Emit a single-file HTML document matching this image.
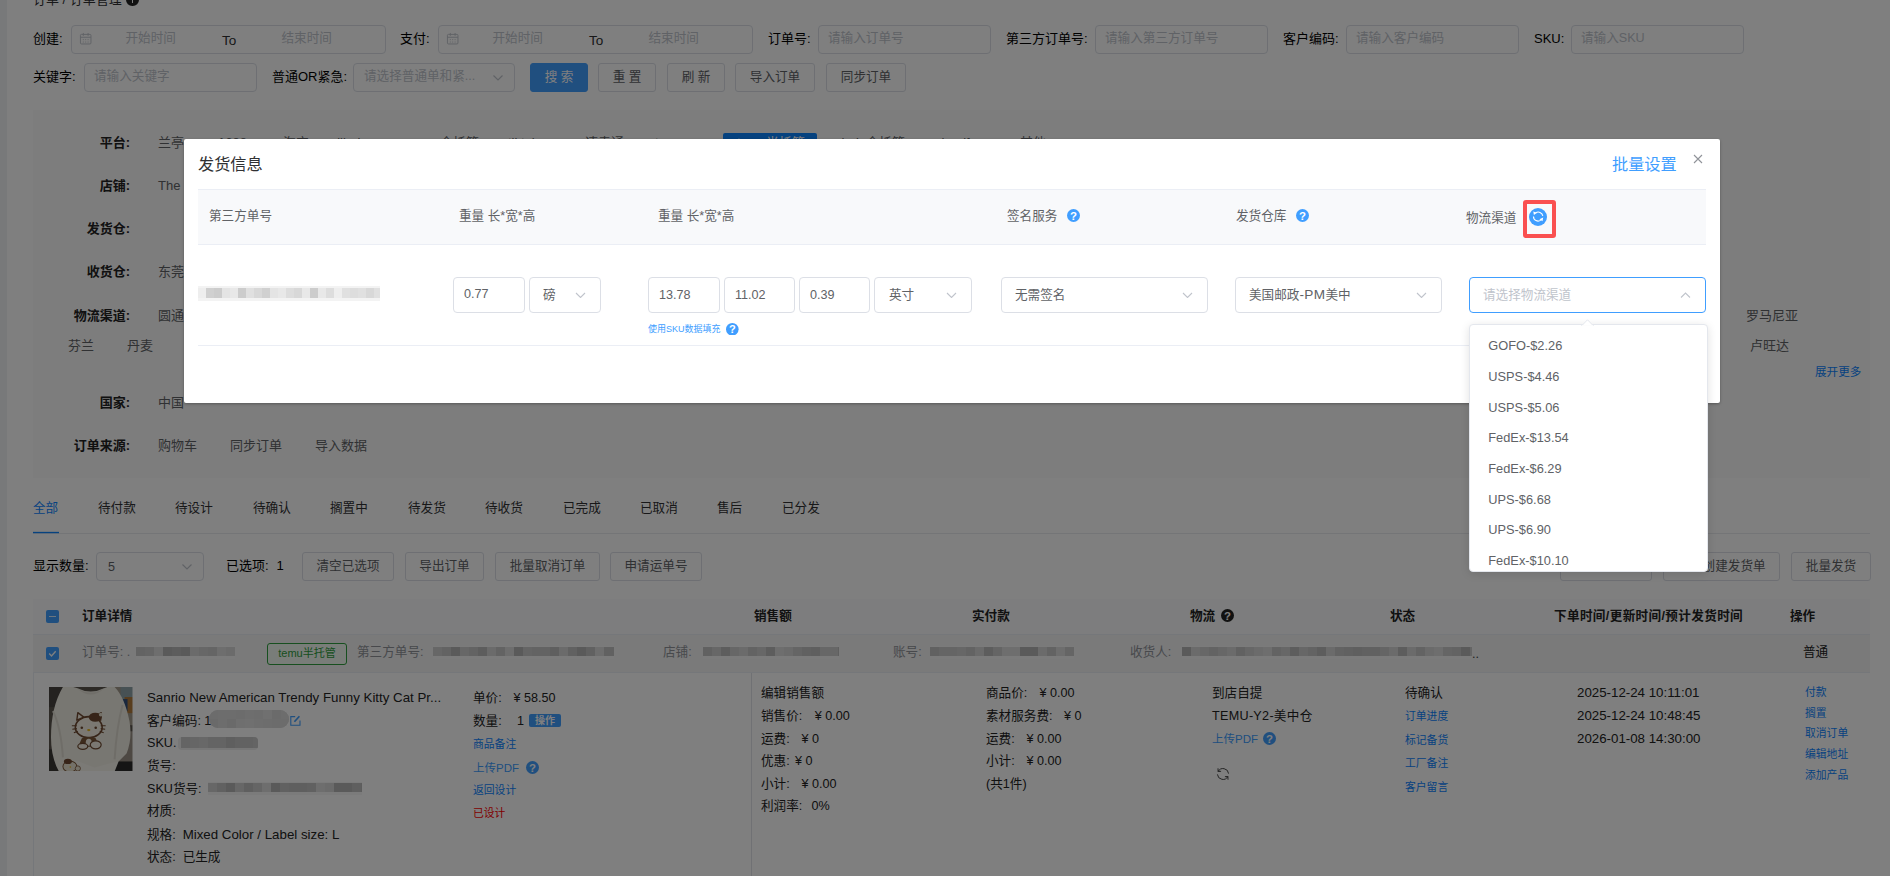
<!DOCTYPE html>
<html lang="zh-CN">
<head>
<meta charset="utf-8">
<title>订单管理</title>
<style>
*{box-sizing:border-box;margin:0;padding:0}
html,body{width:1890px;height:876px;overflow:hidden;background:#fff}
body{position:relative;font-family:"Liberation Sans","Noto Sans CJK SC",sans-serif;font-size:14px;color:#000;line-height:1}
.a{position:absolute;white-space:nowrap}
.t{position:absolute;white-space:nowrap;line-height:20px;height:20px}
.side{left:0;top:0;width:7px;height:876px;background:#f0f2f5}
.inp{position:absolute;height:29px;border:1px solid #dcdfe6;border-radius:4px;background:#fff;color:#c0c4cc;font-size:12.6px;line-height:25px;padding-left:9px;white-space:nowrap;overflow:hidden}
.lbl{position:absolute;white-space:nowrap;font-size:13px;line-height:20px;color:#000;font-weight:400}
.btn{position:absolute;height:29px;border:1px solid #dcdfe6;border-radius:3px;background:#fff;color:#606266;font-size:12.6px;line-height:26.5px;text-align:center;white-space:nowrap}
.btn.pri{background:#409eff;border-color:#409eff;color:#fff}
.blue{color:#409eff}
.lk{color:#409eff}
</style>
</head>
<body>
<!-- ================= BASE PAGE ================= -->
<div id="page" class="a" style="left:0;top:0;width:1890px;height:876px">
<div class="a side"></div>

<!-- breadcrumb (cut off at top) -->
<div class="t" style="left:33px;top:-10px;font-size:13px;color:#303133">订单 / 订单管理</div>
<div class="a" style="left:126px;top:-7px;width:12.5px;height:12.5px;border-radius:50%;background:#222"><i class="a" style="left:5.6px;top:6px;width:1.4px;height:4px;background:#fff"></i></div>


<!-- filter row 1 -->
<div class="lbl" style="left:33px;top:29px">创建:</div>
<div class="inp" style="left:71px;top:25px;width:315px;padding:0"><svg class="a" style="left:7px;top:5.7px" width="13.4" height="13.4" viewBox="0 0 14 14" fill="none" stroke="#c0c4cc" stroke-width="1"><rect x="1.5" y="2.5" width="11" height="10" rx="1"/><path d="M1.5 5.5h11M4.5 1v3M9.5 1v3"/><path d="M4 8h1M6.5 8h1M9 8h1M4 10.5h1M6.5 10.5h1M9 10.5h1" stroke-width="1"/></svg><span class="a" style="left:53.5px;top:-0.4px">开始时间</span><span class="a" style="left:150px;top:2px;color:#303133;font-size:13.5px">To</span><span class="a" style="left:209.5px;top:-0.4px">结束时间</span></div>
<div class="lbl" style="left:400px;top:29px">支付:</div>
<div class="inp" style="left:438px;top:25px;width:315px;padding:0"><svg class="a" style="left:7px;top:5.7px" width="13.4" height="13.4" viewBox="0 0 14 14" fill="none" stroke="#c0c4cc" stroke-width="1"><rect x="1.5" y="2.5" width="11" height="10" rx="1"/><path d="M1.5 5.5h11M4.5 1v3M9.5 1v3"/><path d="M4 8h1M6.5 8h1M9 8h1M4 10.5h1M6.5 10.5h1M9 10.5h1" stroke-width="1"/></svg><span class="a" style="left:53.5px;top:-0.4px">开始时间</span><span class="a" style="left:150px;top:2px;color:#303133;font-size:13.5px">To</span><span class="a" style="left:209.5px;top:-0.4px">结束时间</span></div>
<div class="lbl" style="left:768px;top:29px">订单号:</div>
<div class="inp" style="left:818px;top:25px;width:173px">请输入订单号</div>
<div class="lbl" style="left:1006px;top:29px">第三方订单号:</div>
<div class="inp" style="left:1095px;top:25px;width:173px">请输入第三方订单号</div>
<div class="lbl" style="left:1283px;top:29px">客户编码:</div>
<div class="inp" style="left:1346px;top:25px;width:173px">请输入客户编码</div>
<div class="lbl" style="left:1534px;top:29px">SKU:</div>
<div class="inp" style="left:1571px;top:25px;width:173px">请输入SKU</div>
<!-- filter row 2 -->
<div class="lbl" style="left:33px;top:67px">关键字:</div>
<div class="inp" style="left:84px;top:63px;width:173px">请输入关键字</div>
<div class="lbl" style="left:272px;top:67px">普通OR紧急:</div>
<div class="inp" style="left:353px;top:63px;width:162px;padding-left:10px">请选择普通单和紧...<svg class="a" style="right:10px;top:9px" width="12" height="10" viewBox="0 0 12 10" fill="none" stroke="#c0c4cc" stroke-width="1.2"><path d="M1.5 2.5l4.5 4.5 4.5-4.5"/></svg></div>
<div class="btn pri" style="left:530px;top:63px;width:58px">搜 索</div>
<div class="btn" style="left:598px;top:63px;width:58px">重 置</div>
<div class="btn" style="left:667px;top:63px;width:58px">刷 新</div>
<div class="btn" style="left:735px;top:63px;width:80px">导入订单</div>
<div class="btn" style="left:826px;top:63px;width:80px">同步订单</div>


<!-- filter panel -->
<style>
.fl{position:absolute;left:33px;width:97px;text-align:right;font-size:13px;font-weight:700;color:#222;line-height:20px;white-space:nowrap}
.fv{position:absolute;font-size:13px;color:#606266;line-height:20px;white-space:nowrap}
</style>
<div class="a" style="left:33px;top:110px;width:1837px;height:368px;background:#fafafa"></div>
<div class="fl" style="top:133px">平台:</div><div class="fv" style="left:158px;top:133px">兰亭</div><div class="fv" style="left:218px;top:133px">1688</div><div class="fv" style="left:283px;top:133px">淘宝</div><div class="fv" style="left:330px;top:133px">alibaba</div><div class="fv" style="left:440px;top:133px">全托管</div><div class="fv" style="left:508px;top:133px">tiktok</div><div class="fv" style="left:585px;top:133px">速卖通</div><div class="fv" style="left:655px;top:133px">temu</div><div class="fv" style="left:835px;top:133px">shein全托管</div><div class="fv" style="left:935px;top:133px">shopify</div><div class="fv" style="left:1020px;top:133px">其他</div>
<div class="a" style="left:723px;top:133px;width:94px;height:22px;background:#0d84ff;color:#fff;font-size:13px;line-height:20px;text-align:right;padding-right:12px;border-radius:2px">temu半托管</div>
<div class="fl" style="top:176px">店铺:</div><div class="fv" style="left:158px;top:176px">The</div>
<div class="fl" style="top:219px">发货仓:</div>
<div class="fl" style="top:262px">收货仓:</div><div class="fv" style="left:158px;top:262px">东莞</div>
<div class="fl" style="top:306px">物流渠道:</div><div class="fv" style="left:158px;top:306px">圆通</div><div class="fv" style="left:1746px;top:306px">罗马尼亚</div>
<div class="fv" style="left:68px;top:336px">芬兰</div><div class="fv" style="left:127px;top:336px">丹麦</div><div class="fv" style="left:1750px;top:336px">卢旺达</div>
<div class="a" style="left:1815px;top:364px;font-size:11.6px;line-height:16px;color:#0d84ff">展开更多</div>
<div class="fl" style="top:393px">国家:</div><div class="fv" style="left:158px;top:393px">中国</div>
<div class="fl" style="top:436px">订单来源:</div><div class="fv" style="left:158px;top:436px">购物车</div><div class="fv" style="left:230px;top:436px">同步订单</div><div class="fv" style="left:315px;top:436px">导入数据</div>


<!-- tabs -->
<div class="t" style="left:33px;top:498px;font-size:12.6px;color:#0d84ff">全部</div><div class="t" style="left:98px;top:498px;font-size:12.6px;color:#303133">待付款</div><div class="t" style="left:175px;top:498px;font-size:12.6px;color:#303133">待设计</div><div class="t" style="left:253px;top:498px;font-size:12.6px;color:#303133">待确认</div><div class="t" style="left:330px;top:498px;font-size:12.6px;color:#303133">搁置中</div><div class="t" style="left:408px;top:498px;font-size:12.6px;color:#303133">待发货</div><div class="t" style="left:485px;top:498px;font-size:12.6px;color:#303133">待收货</div><div class="t" style="left:563px;top:498px;font-size:12.6px;color:#303133">已完成</div><div class="t" style="left:640px;top:498px;font-size:12.6px;color:#303133">已取消</div><div class="t" style="left:717px;top:498px;font-size:12.6px;color:#303133">售后</div><div class="t" style="left:782px;top:498px;font-size:12.6px;color:#303133">已分发</div>
<svg class="a" style="left:33px;top:531px" width="1837" height="4" viewBox="0 0 1837 4"><rect x="0" y="2.15" width="1837" height=".9" fill="#e4e7ed"/><rect x="0" y=".85" width="26" height="1.35" fill="#0d84ff"/></svg>
<!-- toolbar -->
<div class="lbl" style="left:33px;top:556px;font-size:13px">显示数量:</div>
<div class="inp" style="left:96px;top:552px;width:108px;color:#606266;padding-left:11px;line-height:28px">5<svg class="a" style="right:10px;top:9px" width="12" height="10" viewBox="0 0 12 10" fill="none" stroke="#c0c4cc" stroke-width="1.2"><path d="M1.5 2.5l4.5 4.5 4.5-4.5"/></svg></div>
<div class="lbl" style="left:226px;top:556px;font-size:13px">已选项:<span class="a" style="left:50.5px;top:0">1</span></div>
<div class="btn" style="left:302px;top:552px;width:92px">清空已选项</div>
<div class="btn" style="left:405px;top:552px;width:79px">导出订单</div>
<div class="btn" style="left:495px;top:552px;width:105px">批量取消订单</div>
<div class="btn" style="left:610px;top:552px;width:92px">申请运单号</div>
<div class="btn" style="left:1560px;top:552px;width:92px">批量打印</div>
<div class="btn" style="left:1663px;top:552px;width:117px">批量创建发货单</div>
<div class="btn" style="left:1791px;top:552px;width:80px">批量发货</div>


<!-- table -->
<style>
.th{position:absolute;top:606px;font-size:12.6px;font-weight:700;color:#222;line-height:20px;white-space:nowrap}
.g{position:absolute;font-size:12.6px;color:#909399;line-height:20px;white-space:nowrap}
.d{position:absolute;font-size:12.6px;color:#222;line-height:20px;white-space:nowrap;margin-top:.6px}
.s{position:absolute;font-size:10.8px;color:#0d84ff;line-height:16px;white-space:nowrap;margin-top:1px}
.cb{position:absolute;width:13px;height:13px;border-radius:2px;background:#409eff}
</style>
<div class="a" style="left:33px;top:599px;width:1837px;height:35px;background:#fafbfc"></div>
<div class="a" style="left:33px;top:634px;width:1837px;height:39px;background:#f4f4f5;border-top:1px solid #ebeef5;border-bottom:1px solid #ebeef5"></div>
<div class="a" style="left:33px;top:673px;width:1px;height:203px;background:#ebeef5"></div>
<div class="a" style="left:751px;top:673px;width:1px;height:203px;background:#e0e3e8"></div>
<div class="cb" style="left:46px;top:610px"><i class="a" style="left:3px;top:6px;width:7px;height:1px;background:#fff;opacity:.8"></i></div>
<div class="th" style="left:82px">订单详情</div>
<div class="th" style="left:754px">销售额</div>
<div class="th" style="left:972px">实付款</div>
<div class="th" style="left:1190px">物流</div>
<svg class="a" style="left:1221px;top:609px" width="13" height="13" viewBox="0 0 13 13"><circle cx="6.5" cy="6.5" r="6.5" fill="#222"/><text x="6.55" y="10.7" text-anchor="middle" font-family="Liberation Sans,sans-serif" font-weight="700" font-size="11.4" fill="#fff">?</text></svg>
<div class="th" style="left:1390px">状态</div>
<div class="th" style="left:1554px;letter-spacing:.36px">下单时间/更新时间/预计发货时间</div>
<div class="th" style="left:1790px">操作</div>
<!-- order header row -->
<div class="cb" style="left:46px;top:647px"><svg class="a" style="left:2px;top:2px" width="9" height="9" viewBox="0 0 9 9" fill="none" stroke="#fff" stroke-width="1.4"><path d="M1.2 4.6l2.3 2.3 4.2-4.6"/></svg></div>
<div class="g" style="left:82px;top:642px">订单号: .</div>
<div class="a" style="left:136px;top:646px;width:99px;height:13px;overflow:hidden;background:#f6f6f6"><i style="position:absolute;left:0px;top:1px;width:9px;height:9px;background:#c6c6c6"></i><i style="position:absolute;left:9px;top:1px;width:9px;height:9px;background:#cacaca"></i><i style="position:absolute;left:18px;top:1px;width:9px;height:9px;background:#dcdcdc"></i><i style="position:absolute;left:27px;top:1px;width:9px;height:9px;background:#b4b4b4"></i><i style="position:absolute;left:36px;top:1px;width:9px;height:9px;background:#bababa"></i><i style="position:absolute;left:45px;top:1px;width:9px;height:9px;background:#b4b4b4"></i><i style="position:absolute;left:54px;top:1px;width:9px;height:9px;background:#d6d6d6"></i><i style="position:absolute;left:63px;top:1px;width:9px;height:9px;background:#cecece"></i><i style="position:absolute;left:72px;top:1px;width:9px;height:9px;background:#cacaca"></i><i style="position:absolute;left:81px;top:1px;width:9px;height:9px;background:#dcdcdc"></i><i style="position:absolute;left:90px;top:1px;width:9px;height:9px;background:#d6d6d6"></i><i style="position:absolute;left:99px;top:1px;width:9px;height:9px;background:#cecece"></i></div>
<div class="a" style="left:267px;top:643px;width:80px;height:22px;border:1px solid #2e9e3e;border-radius:3px;background:#f3faf3;color:#2e9e3e;font-size:11px;line-height:19.5px;text-align:center">temu半托管</div>
<div class="g" style="left:357px;top:642px">第三方单号:</div>
<div class="a" style="left:433px;top:646px;width:181px;height:13px;overflow:hidden;background:#f6f6f6"><i style="position:absolute;left:0px;top:1px;width:9px;height:9px;background:#cecece"></i><i style="position:absolute;left:9px;top:1px;width:9px;height:9px;background:#c6c6c6"></i><i style="position:absolute;left:18px;top:1px;width:9px;height:9px;background:#b4b4b4"></i><i style="position:absolute;left:27px;top:1px;width:9px;height:9px;background:#cecece"></i><i style="position:absolute;left:36px;top:1px;width:9px;height:9px;background:#c6c6c6"></i><i style="position:absolute;left:45px;top:1px;width:9px;height:9px;background:#bababa"></i><i style="position:absolute;left:54px;top:1px;width:9px;height:9px;background:#d6d6d6"></i><i style="position:absolute;left:63px;top:1px;width:9px;height:9px;background:#c6c6c6"></i><i style="position:absolute;left:72px;top:1px;width:9px;height:9px;background:#dcdcdc"></i><i style="position:absolute;left:81px;top:1px;width:9px;height:9px;background:#b4b4b4"></i><i style="position:absolute;left:90px;top:1px;width:9px;height:9px;background:#cacaca"></i><i style="position:absolute;left:99px;top:1px;width:9px;height:9px;background:#c6c6c6"></i><i style="position:absolute;left:108px;top:1px;width:9px;height:9px;background:#c6c6c6"></i><i style="position:absolute;left:117px;top:1px;width:9px;height:9px;background:#bebebe"></i><i style="position:absolute;left:126px;top:1px;width:9px;height:9px;background:#d6d6d6"></i><i style="position:absolute;left:135px;top:1px;width:9px;height:9px;background:#c2c2c2"></i><i style="position:absolute;left:144px;top:1px;width:9px;height:9px;background:#b4b4b4"></i><i style="position:absolute;left:153px;top:1px;width:9px;height:9px;background:#c2c2c2"></i><i style="position:absolute;left:162px;top:1px;width:9px;height:9px;background:#dcdcdc"></i><i style="position:absolute;left:171px;top:1px;width:9px;height:9px;background:#c2c2c2"></i><i style="position:absolute;left:180px;top:1px;width:9px;height:9px;background:#c2c2c2"></i></div>
<div class="g" style="left:663px;top:642px">店铺:</div>
<div class="a" style="left:703px;top:646px;width:136px;height:13px;overflow:hidden;background:#f6f6f6"><i style="position:absolute;left:0px;top:1px;width:9px;height:9px;background:#c2c2c2"></i><i style="position:absolute;left:9px;top:1px;width:9px;height:9px;background:#cecece"></i><i style="position:absolute;left:18px;top:1px;width:9px;height:9px;background:#bababa"></i><i style="position:absolute;left:27px;top:1px;width:9px;height:9px;background:#cecece"></i><i style="position:absolute;left:36px;top:1px;width:9px;height:9px;background:#d6d6d6"></i><i style="position:absolute;left:45px;top:1px;width:9px;height:9px;background:#c6c6c6"></i><i style="position:absolute;left:54px;top:1px;width:9px;height:9px;background:#cecece"></i><i style="position:absolute;left:63px;top:1px;width:9px;height:9px;background:#bababa"></i><i style="position:absolute;left:72px;top:1px;width:9px;height:9px;background:#dcdcdc"></i><i style="position:absolute;left:81px;top:1px;width:9px;height:9px;background:#d6d6d6"></i><i style="position:absolute;left:90px;top:1px;width:9px;height:9px;background:#cacaca"></i><i style="position:absolute;left:99px;top:1px;width:9px;height:9px;background:#c2c2c2"></i><i style="position:absolute;left:108px;top:1px;width:9px;height:9px;background:#bebebe"></i><i style="position:absolute;left:117px;top:1px;width:9px;height:9px;background:#cecece"></i><i style="position:absolute;left:126px;top:1px;width:9px;height:9px;background:#cecece"></i><i style="position:absolute;left:135px;top:1px;width:9px;height:9px;background:#bebebe"></i></div>
<div class="g" style="left:893px;top:642px">账号:</div>
<div class="a" style="left:930px;top:646px;width:144px;height:13px;overflow:hidden;background:#f6f6f6"><i style="position:absolute;left:0px;top:1px;width:9px;height:9px;background:#c2c2c2"></i><i style="position:absolute;left:9px;top:1px;width:9px;height:9px;background:#cacaca"></i><i style="position:absolute;left:18px;top:1px;width:9px;height:9px;background:#cacaca"></i><i style="position:absolute;left:27px;top:1px;width:9px;height:9px;background:#cecece"></i><i style="position:absolute;left:36px;top:1px;width:9px;height:9px;background:#c6c6c6"></i><i style="position:absolute;left:45px;top:1px;width:9px;height:9px;background:#d6d6d6"></i><i style="position:absolute;left:54px;top:1px;width:9px;height:9px;background:#bababa"></i><i style="position:absolute;left:63px;top:1px;width:9px;height:9px;background:#cacaca"></i><i style="position:absolute;left:72px;top:1px;width:9px;height:9px;background:#dcdcdc"></i><i style="position:absolute;left:81px;top:1px;width:9px;height:9px;background:#dcdcdc"></i><i style="position:absolute;left:90px;top:1px;width:9px;height:9px;background:#b4b4b4"></i><i style="position:absolute;left:99px;top:1px;width:9px;height:9px;background:#b4b4b4"></i><i style="position:absolute;left:108px;top:1px;width:9px;height:9px;background:#d6d6d6"></i><i style="position:absolute;left:117px;top:1px;width:9px;height:9px;background:#c6c6c6"></i><i style="position:absolute;left:126px;top:1px;width:9px;height:9px;background:#dcdcdc"></i><i style="position:absolute;left:135px;top:1px;width:9px;height:9px;background:#cacaca"></i><i style="position:absolute;left:144px;top:1px;width:9px;height:9px;background:#b4b4b4"></i></div>
<div class="g" style="left:1130px;top:642px">收货人:</div>
<div class="a" style="left:1182px;top:646px;width:290px;height:13px;overflow:hidden;background:#f6f6f6"><i style="position:absolute;left:0px;top:1px;width:9px;height:9px;background:#b4b4b4"></i><i style="position:absolute;left:9px;top:1px;width:9px;height:9px;background:#d6d6d6"></i><i style="position:absolute;left:18px;top:1px;width:9px;height:9px;background:#cecece"></i><i style="position:absolute;left:27px;top:1px;width:9px;height:9px;background:#c6c6c6"></i><i style="position:absolute;left:36px;top:1px;width:9px;height:9px;background:#cecece"></i><i style="position:absolute;left:45px;top:1px;width:9px;height:9px;background:#d6d6d6"></i><i style="position:absolute;left:54px;top:1px;width:9px;height:9px;background:#c2c2c2"></i><i style="position:absolute;left:63px;top:1px;width:9px;height:9px;background:#cecece"></i><i style="position:absolute;left:72px;top:1px;width:9px;height:9px;background:#d6d6d6"></i><i style="position:absolute;left:81px;top:1px;width:9px;height:9px;background:#dcdcdc"></i><i style="position:absolute;left:90px;top:1px;width:9px;height:9px;background:#c6c6c6"></i><i style="position:absolute;left:99px;top:1px;width:9px;height:9px;background:#cecece"></i><i style="position:absolute;left:108px;top:1px;width:9px;height:9px;background:#bababa"></i><i style="position:absolute;left:117px;top:1px;width:9px;height:9px;background:#cecece"></i><i style="position:absolute;left:126px;top:1px;width:9px;height:9px;background:#c6c6c6"></i><i style="position:absolute;left:135px;top:1px;width:9px;height:9px;background:#bababa"></i><i style="position:absolute;left:144px;top:1px;width:9px;height:9px;background:#d6d6d6"></i><i style="position:absolute;left:153px;top:1px;width:9px;height:9px;background:#c6c6c6"></i><i style="position:absolute;left:162px;top:1px;width:9px;height:9px;background:#c2c2c2"></i><i style="position:absolute;left:171px;top:1px;width:9px;height:9px;background:#bebebe"></i><i style="position:absolute;left:180px;top:1px;width:9px;height:9px;background:#c2c2c2"></i><i style="position:absolute;left:189px;top:1px;width:9px;height:9px;background:#c2c2c2"></i><i style="position:absolute;left:198px;top:1px;width:9px;height:9px;background:#cacaca"></i><i style="position:absolute;left:207px;top:1px;width:9px;height:9px;background:#d6d6d6"></i><i style="position:absolute;left:216px;top:1px;width:9px;height:9px;background:#bababa"></i><i style="position:absolute;left:225px;top:1px;width:9px;height:9px;background:#d6d6d6"></i><i style="position:absolute;left:234px;top:1px;width:9px;height:9px;background:#c6c6c6"></i><i style="position:absolute;left:243px;top:1px;width:9px;height:9px;background:#d6d6d6"></i><i style="position:absolute;left:252px;top:1px;width:9px;height:9px;background:#dcdcdc"></i><i style="position:absolute;left:261px;top:1px;width:9px;height:9px;background:#cacaca"></i><i style="position:absolute;left:270px;top:1px;width:9px;height:9px;background:#c6c6c6"></i><i style="position:absolute;left:279px;top:1px;width:9px;height:9px;background:#b4b4b4"></i><i style="position:absolute;left:288px;top:1px;width:9px;height:9px;background:#cacaca"></i></div>
<div class="g" style="left:1472px;top:644px;color:#444">..</div>
<div class="d" style="left:1803px;top:641px">普通</div>
<!-- detail row -->
<svg class="a" style="left:49px;top:686.5px" width="83.5" height="84.5" viewBox="0 0 84 84" preserveAspectRatio="none">
<defs><filter id="bl" x="-5%" y="-5%" width="110%" height="110%"><feGaussianBlur stdDeviation="0.7"/></filter><clipPath id="ic"><rect width="84" height="84"/></clipPath></defs>
<g clip-path="url(#ic)"><g filter="url(#bl)">
<rect x="-2" y="-2" width="88" height="88" fill="#5a544e"/>
<rect x="-2" y="-2" width="16" height="22" fill="#4a4541"/>
<rect x="64" y="-2" width="22" height="40" fill="#a39a8c"/>
<rect x="72" y="0" width="14" height="12" fill="#8fa3a8"/>
<rect x="76" y="10" width="10" height="16" fill="#b07a3c"/>
<rect x="74" y="12" width="5" height="12" fill="#33507a"/>
<rect x="-2" y="62" width="12" height="24" fill="#3a3836"/>
<rect x="60" y="70" width="26" height="16" fill="#2b2b2b"/>
<rect x="70" y="44" width="16" height="30" fill="#9a9186"/>
<path d="M14 0 Q20 -2 28 1 Q42 8 56 1 Q62 -2 66 0 Q76 10 81 34 Q84 52 78 66 L70 74 Q62 84 52 84 L10 84 Q2 70 2 50 Q2 20 14 0Z" fill="#f1eee4"/>
<path d="M28 1 Q42 10 56 1 Q42 14 28 1Z" fill="#e2dfd4"/>
<path d="M4 24 Q12 40 14 70" stroke="#dedbd0" stroke-width="2" fill="none"/>
<path d="M74 18 Q68 40 66 72" stroke="#dedbd0" stroke-width="2" fill="none"/>
<path d="M10 84 Q14 70 30 74 L46 80 L60 76 L70 74 L66 84Z" fill="#f6f4ec"/>
<ellipse cx="40" cy="40" rx="13.5" ry="10.5" fill="#f6f1e4" stroke="#6e4a30" stroke-width="1.6"/>
<path d="M28 33 L29 25.5 L35 30Z M52 33 L52.5 25.5 L46 30Z" fill="#f6f1e4" stroke="#6e4a30" stroke-width="1.4" stroke-linejoin="round"/>
<ellipse cx="46.5" cy="30" rx="6.5" ry="4.5" fill="#6e4a30"/>
<circle cx="52" cy="27.5" r="1.8" fill="#e9e2d2"/>
<circle cx="33" cy="40.5" r="1.3" fill="#6e4a30"/><circle cx="47" cy="40.5" r="1.3" fill="#6e4a30"/>
<ellipse cx="40" cy="42.8" rx="1.7" ry="1.1" fill="#e8b820"/>
<path d="M23 38.5h5M23.5 42l4.5 -.6M25 45.5l4 -1.6M57 38.5h-5M56.500 42l-4.5 -.6M55 45.500l-4 -1.600" stroke="#6e4a30" stroke-width="1.1"/>
<path d="M33 51 Q40 48 47 51 L50 58 Q40 61 30 58Z" fill="#7a5638"/>
<ellipse cx="40" cy="55" rx="3" ry="3.5" fill="#f6f1e4"/>
<ellipse cx="34" cy="59" rx="5" ry="3" fill="#f6f1e4" stroke="#6e4a30" stroke-width="1.2"/>
<ellipse cx="47" cy="57.5" rx="5.5" ry="4" fill="#f6f1e4" stroke="#6e4a30" stroke-width="1.2"/>
<ellipse cx="21" cy="79" rx="7" ry="5.5" fill="#e9e2d0" stroke="#7a5638" stroke-width="1"/>
<ellipse cx="19" cy="74" rx="4" ry="2.6" fill="#6e4a30"/>
<circle cx="29" cy="81" r="2.6" fill="#e9e2d0" stroke="#7a5638" stroke-width=".8"/>
<circle cx="21.5" cy="79.500" r=".8" fill="#e8b820"/>
</g></g></svg>
<div class="d" style="left:147px;top:687px"><span style="font-size:13.3px">Sanrio New American Trendy Funny Kitty Cat Pr...</span></div><div class="d" style="left:147px;top:710px">客户编码: 1</div><div class="d" style="left:147px;top:732px">SKU.</div><div class="d" style="left:147px;top:755px">货号:</div><div class="d" style="left:147px;top:778px">SKU货号:</div><div class="d" style="left:147px;top:800px">材质:</div><div class="d" style="left:147px;top:824px">规格: &nbsp;<span style="font-size:13.3px">Mixed Color / Label size: L</span></div><div class="d" style="left:147px;top:846px">状态: &nbsp;已生成</div>
<div class="a" style="left:209px;top:710px;width:80px;height:18px;overflow:hidden;border-radius:9px;background:#dcdcdc"><i style="position:absolute;left:0px;top:0px;width:9px;height:9px;background:#d8d8d8"></i><i style="position:absolute;left:9px;top:0px;width:9px;height:9px;background:#dadada"></i><i style="position:absolute;left:18px;top:0px;width:9px;height:9px;background:#dadada"></i><i style="position:absolute;left:27px;top:0px;width:9px;height:9px;background:#d8d8d8"></i><i style="position:absolute;left:36px;top:0px;width:9px;height:9px;background:#dcdcdc"></i><i style="position:absolute;left:45px;top:0px;width:9px;height:9px;background:#dadada"></i><i style="position:absolute;left:54px;top:0px;width:9px;height:9px;background:#e0e0e0"></i><i style="position:absolute;left:63px;top:0px;width:9px;height:9px;background:#d6d6d6"></i><i style="position:absolute;left:72px;top:0px;width:9px;height:9px;background:#dadada"></i><i style="position:absolute;left:0px;top:9px;width:9px;height:9px;background:#d4d4d4"></i><i style="position:absolute;left:9px;top:9px;width:9px;height:9px;background:#dadada"></i><i style="position:absolute;left:18px;top:9px;width:9px;height:9px;background:#d4d4d4"></i><i style="position:absolute;left:27px;top:9px;width:9px;height:9px;background:#dedede"></i><i style="position:absolute;left:36px;top:9px;width:9px;height:9px;background:#e0e0e0"></i><i style="position:absolute;left:45px;top:9px;width:9px;height:9px;background:#dcdcdc"></i><i style="position:absolute;left:54px;top:9px;width:9px;height:9px;background:#dadada"></i><i style="position:absolute;left:63px;top:9px;width:9px;height:9px;background:#d8d8d8"></i><i style="position:absolute;left:72px;top:9px;width:9px;height:9px;background:#d8d8d8"></i></div><div class="a" style="left:178px;top:737px;width:80px;height:13px;overflow:hidden;border-radius:4px;background:#eee"><i style="position:absolute;left:3px;top:0;width:9px;height:11px;background:#c8c8c8"></i><i style="position:absolute;left:12px;top:0;width:9px;height:11px;background:#cccccc"></i><i style="position:absolute;left:21px;top:0;width:9px;height:11px;background:#d0d0d0"></i><i style="position:absolute;left:30px;top:0;width:9px;height:11px;background:#c8c8c8"></i><i style="position:absolute;left:39px;top:0;width:9px;height:11px;background:#c8c8c8"></i><i style="position:absolute;left:48px;top:0;width:9px;height:11px;background:#bebebe"></i><i style="position:absolute;left:57px;top:0;width:9px;height:11px;background:#c4c4c4"></i><i style="position:absolute;left:66px;top:0;width:9px;height:11px;background:#c4c4c4"></i><i style="position:absolute;left:75px;top:0;width:9px;height:11px;background:#c8c8c8"></i></div><div class="a" style="left:208px;top:782px;width:154px;height:13px;overflow:hidden;background:#f6f6f6"><i style="position:absolute;left:0px;top:1px;width:9px;height:9px;background:#cecece"></i><i style="position:absolute;left:9px;top:1px;width:9px;height:9px;background:#c2c2c2"></i><i style="position:absolute;left:18px;top:1px;width:9px;height:9px;background:#b4b4b4"></i><i style="position:absolute;left:27px;top:1px;width:9px;height:9px;background:#cecece"></i><i style="position:absolute;left:36px;top:1px;width:9px;height:9px;background:#bebebe"></i><i style="position:absolute;left:45px;top:1px;width:9px;height:9px;background:#cacaca"></i><i style="position:absolute;left:54px;top:1px;width:9px;height:9px;background:#dcdcdc"></i><i style="position:absolute;left:63px;top:1px;width:9px;height:9px;background:#b4b4b4"></i><i style="position:absolute;left:72px;top:1px;width:9px;height:9px;background:#c2c2c2"></i><i style="position:absolute;left:81px;top:1px;width:9px;height:9px;background:#bebebe"></i><i style="position:absolute;left:90px;top:1px;width:9px;height:9px;background:#bebebe"></i><i style="position:absolute;left:99px;top:1px;width:9px;height:9px;background:#c2c2c2"></i><i style="position:absolute;left:108px;top:1px;width:9px;height:9px;background:#dcdcdc"></i><i style="position:absolute;left:117px;top:1px;width:9px;height:9px;background:#d6d6d6"></i><i style="position:absolute;left:126px;top:1px;width:9px;height:9px;background:#b4b4b4"></i><i style="position:absolute;left:135px;top:1px;width:9px;height:9px;background:#b4b4b4"></i><i style="position:absolute;left:144px;top:1px;width:9px;height:9px;background:#bebebe"></i><i style="position:absolute;left:153px;top:1px;width:9px;height:9px;background:#bababa"></i></div><svg class="a" style="left:289.5px;top:714.7px" width="11" height="11" viewBox="0 0 11 11" fill="none" stroke="#409eff" stroke-width="1.1"><path d="M10 5.6V10.2H.8V1.6H5.2"/><path d="M4.4 6.8L9.400 1.2" stroke-width="1.7"/></svg>
<div class="d" style="left:473px;top:687px"><span style="display:inline-block;width:40.6px">单价:</span>¥ 58.50</div><div class="d" style="left:473px;top:710px"><span style="display:inline-block;width:44px">数量:</span>1</div>
<div class="a" style="left:529px;top:714px;width:32px;height:13px;background:#409eff;border-radius:2px;color:#fff;font-size:10px;line-height:13px;text-align:center;font-weight:700">操作</div>
<div class="s" style="left:473px;top:735px">商品备注</div><div class="s" style="left:473px;top:759px"><span style="font-size:11.5px;color:#409eff">上传PDF</span></div><div class="s" style="left:473px;top:781px">返回设计</div>
<svg class="a" style="left:526px;top:761px" width="13" height="13" viewBox="0 0 13 13"><circle cx="6.5" cy="6.5" r="6.5" fill="#409eff"/><text x="6.55" y="10.7" text-anchor="middle" font-family="Liberation Sans,sans-serif" font-weight="700" font-size="11.4" fill="#fff">?</text></svg><div class="s" style="left:473px;top:804px;color:#f00">已设计</div>
<div class="d" style="left:761px;top:682px">编辑销售额</div><div class="d" style="left:761px;top:705px"><span style="display:inline-block;width:53.8px">销售价:</span>¥ 0.00</div><div class="d" style="left:761px;top:728px"><span style="display:inline-block;width:40.5px">运费:</span>¥ 0</div><div class="d" style="left:761px;top:750px"><span style="display:inline-block;width:34px">优惠:</span>¥ 0</div><div class="d" style="left:761px;top:773px"><span style="display:inline-block;width:40.5px">小计:</span>¥ 0.00</div><div class="d" style="left:761px;top:795px"><span style="display:inline-block;width:50.6px">利润率:</span>0%</div>
<div class="d" style="left:986px;top:682px"><span style="display:inline-block;width:53.6px">商品价:</span>¥ 0.00</div><div class="d" style="left:986px;top:705px"><span style="display:inline-block;width:78px">素材服务费:</span>¥ 0</div><div class="d" style="left:986px;top:728px"><span style="display:inline-block;width:40.6px">运费:</span>¥ 0.00</div><div class="d" style="left:986px;top:750px"><span style="display:inline-block;width:40.5px">小计:</span>¥ 0.00</div><div class="d" style="left:986px;top:773px">(共1件)</div>
<div class="d" style="left:1212px;top:682px">到店自提</div><div class="d" style="left:1212px;top:705px"><span style="letter-spacing:.3px">TEMU-Y2-美中仓</span></div>
<div class="s" style="left:1212px;top:730px;font-size:11.5px;color:#409eff">上传PDF</div><svg class="a" style="left:1263px;top:732px" width="13" height="13" viewBox="0 0 13 13"><circle cx="6.5" cy="6.5" r="6.5" fill="#409eff"/><text x="6.55" y="10.7" text-anchor="middle" font-family="Liberation Sans,sans-serif" font-weight="700" font-size="11.4" fill="#fff">?</text></svg>
<svg class="a" style="left:1216px;top:766.9px" width="14" height="14" viewBox="0 0 14 14" fill="none" stroke="#4a4a4a" stroke-width="1"><g transform="translate(7,7)"><path d="M-5 -5.7L-4.9 -2.5L-1.9 -2.7M-4.9 -2.5A5.6 5.6 0 0 1 5.59 -0.39"/><path d="M5 5.7L4.9 2.5L1.9 2.7M4.9 2.5A5.6 5.6 0 0 1 -5.59 0.39"/></g></svg>
<div class="d" style="left:1405px;top:682px">待确认</div>
<div class="s" style="left:1405px;top:707.3px">订单进度</div><div class="s" style="left:1405px;top:731.3px">标记备货</div><div class="s" style="left:1405px;top:754.3px">工厂备注</div><div class="s" style="left:1405px;top:778.3px">客户留言</div>
<div class="d" style="left:1577px;top:682px"><span style="font-size:13.3px">2025-12-24 10:11:01</span></div><div class="d" style="left:1577px;top:705px"><span style="font-size:13.3px">2025-12-24 10:48:45</span></div><div class="d" style="left:1577px;top:728px"><span style="font-size:13.3px">2026-01-08 14:30:00</span></div>
<div class="s" style="left:1805px;top:683.3px">付款</div><div class="s" style="left:1805px;top:704.3px">搁置</div><div class="s" style="left:1805px;top:724.3px">取消订单</div><div class="s" style="left:1805px;top:745.3px">编辑地址</div><div class="s" style="left:1805px;top:766.3px">添加产品</div>

</div>

<!-- ================= MASK ================= -->
<div class="a" style="left:0;top:0;width:1890px;height:876px;background:rgba(0,0,0,.5)"></div>


<!-- ================= MODAL ================= -->
<style>
.mi{position:absolute;top:277px;height:36px;border:1px solid #dcdfe6;border-radius:4px;background:#fff;font-size:12.6px;line-height:34px;white-space:nowrap}
.mh{position:absolute;top:206px;font-size:12.6px;line-height:20px;color:#606266;white-space:nowrap}
</style>
<div class="a" style="left:184px;top:139px;width:1536px;height:264px;background:#fff;border-radius:2px;box-shadow:0 1px 3px rgba(0,0,0,.3)"></div>
<div class="a" style="left:198px;top:153px;font-size:16.2px;line-height:22px;color:#303133">发货信息</div>
<div class="a" style="left:1612px;top:153px;font-size:16.2px;line-height:22px;color:#409eff">批量设置</div>
<svg class="a" style="left:1693px;top:154px" width="10" height="10" viewBox="0 0 10 10" fill="none" stroke="#909399" stroke-width="1.1"><path d="M1 1l8 8M9 1l-8 8"/></svg>
<div class="a" style="left:198px;top:189px;width:1508px;height:56px;background:#f8f9fb;border-top:1px solid #ebeef5;border-bottom:1px solid #ebeef5"></div>
<div class="a" style="left:198px;top:345px;width:1508px;height:1px;background:#ebeef5"></div>
<div class="mh" style="left:209px">第三方单号</div>
<div class="mh" style="left:459px">重量 长*宽*高</div>
<div class="mh" style="left:658px">重量 长*宽*高</div>
<div class="mh" style="left:1007px">签名服务</div><svg class="a" style="left:1067px;top:209px" width="13" height="13" viewBox="0 0 13 13"><circle cx="6.5" cy="6.5" r="6.5" fill="#409eff"/><text x="6.55" y="10.7" text-anchor="middle" font-family="Liberation Sans,sans-serif" font-weight="700" font-size="11.4" fill="#fff">?</text></svg>
<div class="mh" style="left:1236px">发货仓库</div><svg class="a" style="left:1296px;top:209px" width="13" height="13" viewBox="0 0 13 13"><circle cx="6.5" cy="6.5" r="6.5" fill="#409eff"/><text x="6.55" y="10.7" text-anchor="middle" font-family="Liberation Sans,sans-serif" font-weight="700" font-size="11.4" fill="#fff">?</text></svg>
<div class="mh" style="left:1466px;top:208px">物流渠道</div>
<div class="a" style="left:1523px;top:200px;width:33px;height:38px;border:4px solid #fa5050;border-radius:3px"></div>
<svg class="a" style="left:1529px;top:208px" width="18" height="18" viewBox="0 0 18 18"><circle cx="9" cy="9" r="9" fill="#409eff"/><g transform="translate(9.2,8.6)"><g fill="none" stroke="#fff" stroke-width="1.1"><path d="M-2.6 -3.6A4.5 4.3 0 0 1 4.6 -0.8"/><path d="M-4.7 0A4.5 4.3 0 0 0 2.6 3.5"/></g><path d="M-4.9 -5L-1.2 -3.9L-4.3 -1.5z M5 1L4.3 4.7L1.2 2.6z" fill="#fff"/></g></svg>
<div class="a" style="left:198px;top:286px;width:182px;height:15px;overflow:hidden;background:#f3f3f3"><i style="position:absolute;left:0px;top:2px;width:8px;height:10px;background:#eeeeee"></i><i style="position:absolute;left:8px;top:2px;width:8px;height:10px;background:#d0d0d0"></i><i style="position:absolute;left:16px;top:2px;width:8px;height:10px;background:#cccccc"></i><i style="position:absolute;left:24px;top:2px;width:8px;height:10px;background:#e4e4e4"></i><i style="position:absolute;left:32px;top:2px;width:8px;height:10px;background:#e8e8e8"></i><i style="position:absolute;left:40px;top:2px;width:8px;height:10px;background:#cccccc"></i><i style="position:absolute;left:48px;top:2px;width:8px;height:10px;background:#e0e0e0"></i><i style="position:absolute;left:56px;top:2px;width:8px;height:10px;background:#d8d8d8"></i><i style="position:absolute;left:64px;top:2px;width:8px;height:10px;background:#d0d0d0"></i><i style="position:absolute;left:72px;top:2px;width:8px;height:10px;background:#e4e4e4"></i><i style="position:absolute;left:80px;top:2px;width:8px;height:10px;background:#e8e8e8"></i><i style="position:absolute;left:88px;top:2px;width:8px;height:10px;background:#dddddd"></i><i style="position:absolute;left:96px;top:2px;width:8px;height:10px;background:#d8d8d8"></i><i style="position:absolute;left:104px;top:2px;width:8px;height:10px;background:#e8e8e8"></i><i style="position:absolute;left:112px;top:2px;width:8px;height:10px;background:#cccccc"></i><i style="position:absolute;left:120px;top:2px;width:8px;height:10px;background:#e8e8e8"></i><i style="position:absolute;left:128px;top:2px;width:8px;height:10px;background:#dddddd"></i><i style="position:absolute;left:136px;top:2px;width:8px;height:10px;background:#eeeeee"></i><i style="position:absolute;left:144px;top:2px;width:8px;height:10px;background:#e0e0e0"></i><i style="position:absolute;left:152px;top:2px;width:8px;height:10px;background:#dddddd"></i><i style="position:absolute;left:160px;top:2px;width:8px;height:10px;background:#e0e0e0"></i><i style="position:absolute;left:168px;top:2px;width:8px;height:10px;background:#d8d8d8"></i><i style="position:absolute;left:176px;top:2px;width:8px;height:10px;background:#e0e0e0"></i></div>
<div class="mi" style="left:453px;width:72px;padding-left:10px;color:#606266;line-height:32px">0.77</div><div class="mi" style="left:529px;width:72px;padding-left:13px;color:#606266">磅</div><svg class="a" style="left:574.5px;top:291.75px" width="11" height="6.5" viewBox="0 0 11 6.5" fill="none" stroke="#c0c4cc" stroke-width="1.1"><path d="M1 1l4.5 4.5 4.5-4.5"/></svg><div class="mi" style="left:648px;width:72px;padding-left:10px;color:#606266">13.78</div><div class="mi" style="left:724px;width:71px;padding-left:10px;color:#606266">11.02</div><div class="mi" style="left:799px;width:71px;padding-left:10px;color:#606266">0.39</div><div class="mi" style="left:874px;width:98px;padding-left:14px;color:#606266">英寸</div><svg class="a" style="left:946.0px;top:291.75px" width="11" height="6.5" viewBox="0 0 11 6.5" fill="none" stroke="#c0c4cc" stroke-width="1.1"><path d="M1 1l4.5 4.5 4.5-4.5"/></svg><div class="mi" style="left:1001px;width:207px;padding-left:13px;color:#606266">无需签名</div><svg class="a" style="left:1182.0px;top:291.75px" width="11" height="6.5" viewBox="0 0 11 6.5" fill="none" stroke="#c0c4cc" stroke-width="1.1"><path d="M1 1l4.5 4.5 4.5-4.5"/></svg><div class="mi" style="left:1235px;width:207px;padding-left:13px;color:#606266">美国邮政<span style="font-size:13.6px;letter-spacing:.4px">-PM</span>美中</div><svg class="a" style="left:1415.5px;top:291.75px" width="11" height="6.5" viewBox="0 0 11 6.5" fill="none" stroke="#c0c4cc" stroke-width="1.1"><path d="M1 1l4.5 4.5 4.5-4.5"/></svg><div class="mi" style="left:1469px;width:237px;padding-left:13px;color:#c0c4cc;border-color:#409eff">请选择物流渠道</div><svg class="a" style="left:1679.5px;top:291.75px" width="11" height="6.5" viewBox="0 0 11 6.5" fill="none" stroke="#c0c4cc" stroke-width="1.1"><path d="M1 5.5l4.5-4.5 4.5 4.5"/></svg>
<div class="a" style="left:648px;top:323px;font-size:9px;line-height:12px;color:#409eff">使用SKU数据填充</div><svg class="a" style="left:726px;top:322.5px" width="12.6" height="12.6" viewBox="0 0 13 13"><circle cx="6.5" cy="6.5" r="6.5" fill="#409eff"/><text x="6.55" y="10.7" text-anchor="middle" font-family="Liberation Sans,sans-serif" font-weight="700" font-size="11.4" fill="#fff">?</text></svg>

<!-- ================= DROPDOWN ================= -->
<style>.di{position:absolute;left:18.3px;font-size:12.8px;line-height:20px;color:#606266;white-space:nowrap}</style>
<div class="a" style="left:1469px;top:324px;width:238.5px;height:248.3px;background:#fff;border:1px solid #e4e7ed;border-radius:4px;box-shadow:0 2px 10px rgba(0,0,0,.12);overflow:hidden">
<div class="di" style="top:11.30px">GOFO-$2.26</div><div class="di" style="top:41.95px">USPS-$4.46</div><div class="di" style="top:72.60px">USPS-$5.06</div><div class="di" style="top:103.25px">FedEx-$13.54</div><div class="di" style="top:133.90px">FedEx-$6.29</div><div class="di" style="top:164.55px">UPS-$6.68</div><div class="di" style="top:195.20px">UPS-$6.90</div><div class="di" style="top:225.85px">FedEx-$10.10</div><div class="di" style="top:256.50px">UPS-$10.77</div></div>
<svg class="a" style="left:1581px;top:319px" width="13" height="7" viewBox="0 0 13 7"><path d="M0.5 7L6.5 0.8L12.5 7z" fill="#fff" stroke="#e4e7ed" stroke-width="1"/><rect x="1" y="6.2" width="11" height="1" fill="#fff"/></svg>

</body>
</html>
